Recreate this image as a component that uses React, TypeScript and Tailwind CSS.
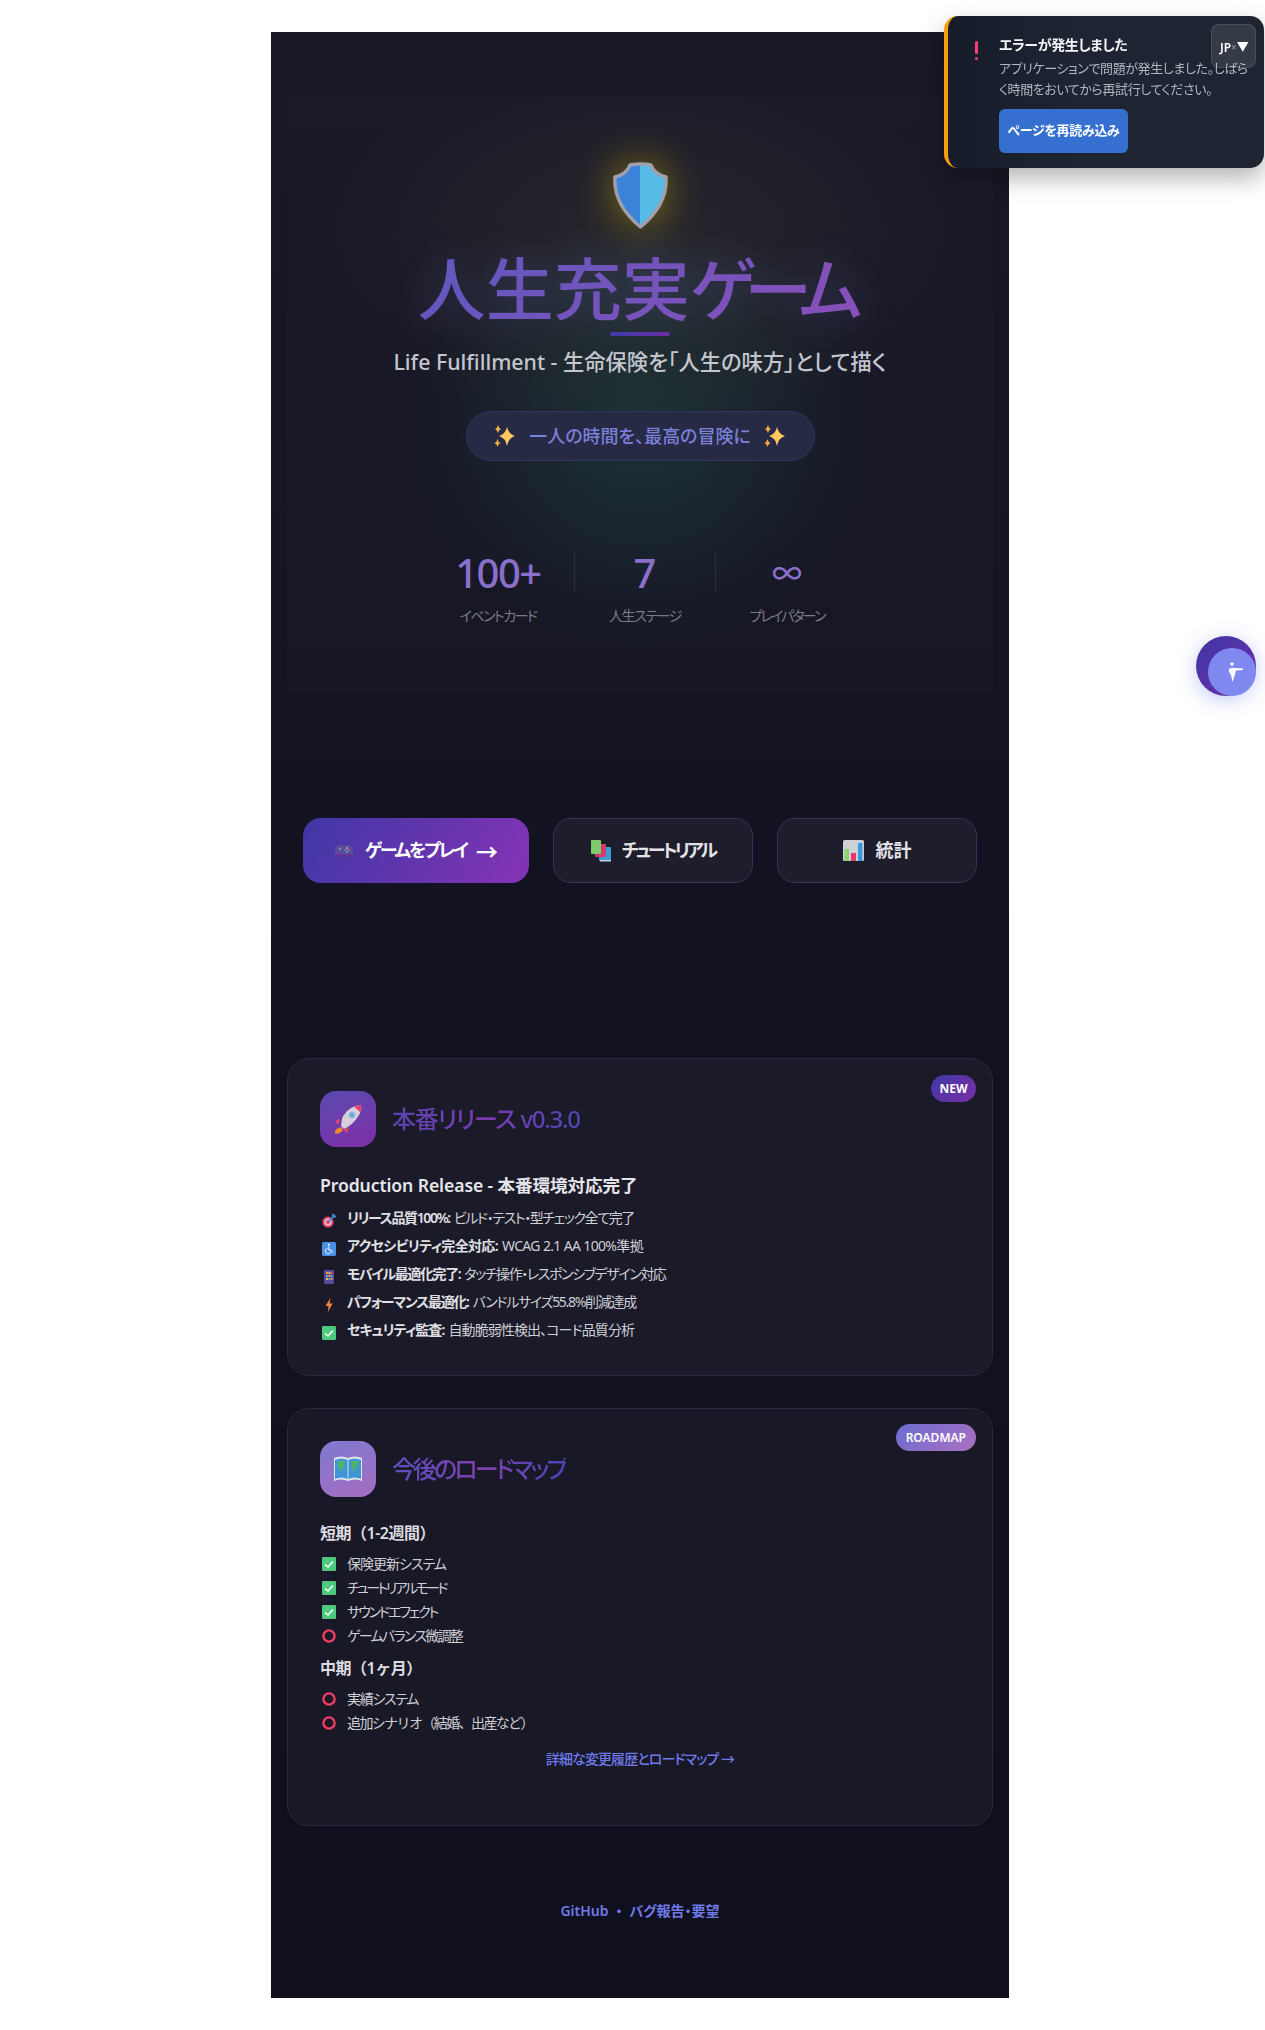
import React from "react"

function ShieldIcon() {
  return (
    <svg width="57" height="67" viewBox="0 0 57 67">
      <defs>
        <linearGradient id="shield-fill" x1="0" y1="0" x2="1" y2="0">
          <stop offset="50%" stopColor="#3b82d9" />
          <stop offset="50%" stopColor="#57bbe8" />
        </linearGradient>
      </defs>
      <path d="M18 3 Q28.5 1 39 3 Q42 12 54 15 Q56 42 28.5 65 Q1 42 3 15 Q15 12 18 3Z" fill="url(#shield-fill)" stroke="#a0a0aa" strokeWidth="3.4" strokeLinejoin="round" />
    </svg>
  )
}

function Sparkles() {
  return (
    <svg width="24" height="24" viewBox="0 0 24 24">
      <path d="M14 3 Q15.5 10 22 12 Q15.5 14 14 22 Q12.5 14 6 12 Q12.5 10 14 3Z" fill="#fdc95c" />
      <path d="M5 1 Q5.6 4 8 5 Q5.6 6 5 9 Q4.4 6 2 5 Q4.4 4 5 1Z" fill="#f9b24a" />
      <path d="M4.5 15 Q5.1 18 7.5 19 Q5.1 20 4.5 23 Q3.9 20 1.5 19 Q3.9 18 4.5 15Z" fill="#f9a83a" />
    </svg>
  )
}

function GamepadIcon() {
  return (
    <svg width="20" height="20" viewBox="0 0 20 20">
      <path d="M5 4 H15 Q18 4 19 11 Q20 17 17 17 Q15 17 13.5 14 H6.5 Q5 17 3 17 Q0 17 1 11 Q2 4 5 4Z" fill="#5b4aa0" />
      <path d="M3 17 Q5 17 6.5 14 H13.5 Q15 17 17 17 L18 13 H2Z" fill="#6d2f90" />
      <circle cx="6" cy="8" r="1.3" fill="#7f8a9e" />
      <circle cx="13" cy="7" r="0.9" fill="#e2c04e" />
      <circle cx="15" cy="9" r="0.9" fill="#e85a7a" />
      <circle cx="11.5" cy="9" r="0.9" fill="#4aa8e0" />
      <circle cx="13" cy="11" r="0.9" fill="#5cc77a" />
    </svg>
  )
}

function BooksIcon() {
  return (
    <svg width="21" height="22" viewBox="0 0 21 22">
      <rect x="8" y="7" width="12" height="14" rx="1" fill="#3f9ad6" />
      <rect x="4" y="4" width="11" height="13" rx="1" fill="#d63a6b" />
      <rect x="0" y="0" width="10" height="14" rx="1" fill="#7ccb6c" />
      <rect x="9" y="20" width="11" height="1.5" fill="#c7d2dd" />
    </svg>
  )
}

function ChartIcon() {
  return (
    <svg width="21" height="21" viewBox="0 0 21 21">
      <rect width="21" height="21" rx="1.5" fill="#cfd0d6" />
      <rect x="1.5" y="9" width="4.5" height="12" fill="#86d36f" />
      <rect x="8" y="13" width="5" height="8" fill="#e8376e" />
      <rect x="15" y="3" width="4.5" height="18" fill="#3a9ae0" />
    </svg>
  )
}

function RocketIcon() {
  return (
    <svg width="32" height="32" viewBox="0 0 32 32">
      <path d="M9 24 Q2 26 3 31 Q8 31 11 27Z" fill="#f08a2c" />
      <path d="M8 16 L3 18 L6 22Z M17 25 L15 30 L11 27Z" fill="#e8416a" />
      <path d="M9 23 Q9 11 19 5 Q24 2 29 2 Q30 7 27 12 Q21 22 12 26Z" fill="#d9cfdc" />
      <path d="M22 3.5 Q26 2 29 2 Q30 5 28.5 9.5Z" fill="#e8416a" />
      <circle cx="20" cy="12" r="3" fill="#5bb0e8" stroke="#a9b8cc" strokeWidth="1" />
    </svg>
  )
}

function MapIcon() {
  return (
    <svg width="30" height="28" viewBox="0 0 30 28">
      <path d="M1 3 Q8 0 15 3 Q22 0 29 3 V26 Q22 23 15 26 Q8 23 1 26Z" fill="#dfe5ea" />
      <path d="M2 5 Q8 2 15 5 Q22 2 28 5 V24 Q22 21 15 24 Q8 21 2 24Z" fill="#3f95d6" />
      <path d="M15 4 V26" stroke="#d0dbe6" strokeWidth="1" />
      <path d="M5 6 L12 6 L11 11 L8 17 L6 12 L4 10Z M18 6 L26 6 L25 11 L22 12 L23 17 L19 14Z" fill="#4fb36a" />
    </svg>
  )
}

function TargetIcon() {
  return (
    <svg width="14" height="14" viewBox="0 0 14 14" className="shrink-0">
      <circle cx="6" cy="8" r="5.6" fill="#e8416e" />
      <circle cx="6" cy="8" r="3.6" fill="#f3c3d0" />
      <circle cx="6" cy="8" r="2" fill="#e8416e" />
      <path d="M6 8 L12 2" stroke="#3a8fd8" strokeWidth="1.6" />
      <path d="M10 0 H12.5 V1.5 H14 V3.5 H11 L10 2Z" fill="#3a8fd8" />
    </svg>
  )
}

function WheelchairIcon() {
  return (
    <svg width="14" height="14" viewBox="0 0 14 14" className="shrink-0">
      <rect width="14" height="14" rx="1.5" fill="#4a8fe8" />
      <circle cx="6.8" cy="2.8" r="1" fill="#fff" />
      <path d="M6.8 4.5 V8 H9.3 L10.5 11" stroke="#fff" strokeWidth="0.9" fill="none" />
      <path d="M5.5 6.3 A2.8 2.8 0 1 0 8.8 10" stroke="#fff" strokeWidth="0.9" fill="none" />
    </svg>
  )
}

function PhoneIcon() {
  return (
    <svg width="14" height="14" viewBox="0 0 14 14" className="shrink-0">
      <rect x="2" y="0" width="10" height="14" rx="1" fill="#5a4a98" />
      <rect x="4" y="2" width="2" height="2" fill="#e8944a" />
      <rect x="6.5" y="2" width="2" height="2" fill="#e8c04a" />
      <rect x="9" y="2" width="1.5" height="2" fill="#e8416e" />
      <rect x="4" y="5" width="2" height="2" fill="#4ab0e0" />
      <rect x="6.5" y="5" width="2" height="2" fill="#e8944a" />
      <rect x="9" y="5" width="1.5" height="2" fill="#5cc77a" />
      <rect x="4" y="8" width="2" height="2" fill="#e8c04a" />
      <rect x="6.5" y="8" width="2" height="2" fill="#4ab0e0" />
      <rect x="9" y="8" width="1.5" height="2" fill="#e8944a" />
    </svg>
  )
}

function BoltIcon() {
  return (
    <svg width="14" height="14" viewBox="0 0 14 14" className="shrink-0">
      <path d="M8.5 0 L3.5 8 H6.5 L6 14 L10.5 5.5 H7.5Z" fill="#f5873c" />
    </svg>
  )
}

function CheckIcon() {
  return (
    <svg width="14" height="14" viewBox="0 0 14 14" className="shrink-0">
      <rect width="14" height="14" rx="1.2" fill="#4ac97f" />
      <path d="M3 7.5 L6 10 L11 4.5" stroke="#fff" strokeWidth="1.6" fill="none" />
    </svg>
  )
}

function RingIcon() {
  return (
    <svg width="14" height="14" viewBox="0 0 14 14" className="shrink-0">
      <circle cx="7" cy="7" r="5.6" fill="none" stroke="#f03d64" strokeWidth="2.4" />
    </svg>
  )
}

const releaseItems = [
  { icon: <TargetIcon />, label: "リリース品質100%:", text: "ビルド・テスト・型チェック全て完了", spacing: "tracking-[-1.4px]" },
  { icon: <WheelchairIcon />, label: "アクセシビリティ完全対応:", text: "WCAG 2.1 AA 100%準拠", spacing: "tracking-[-0.65px]" },
  { icon: <PhoneIcon />, label: "モバイル最適化完了:", text: "タッチ操作・レスポンシブデザイン対応", spacing: "tracking-[-1.4px]" },
  { icon: <BoltIcon />, label: "パフォーマンス最適化:", text: "バンドルサイズ55.8%削減達成", spacing: "tracking-[-1.3px]" },
  { icon: <CheckIcon />, label: "セキュリティ監査:", text: "自動脆弱性検出、コード品質分析", spacing: "tracking-[-0.9px]" },
]

const shortTerm = [
  { icon: <CheckIcon />, text: "保険更新システム", spacing: "tracking-[-1px]" },
  { icon: <CheckIcon />, text: "チュートリアルモード", spacing: "tracking-[-2.6px]" },
  { icon: <CheckIcon />, text: "サウンドエフェクト", spacing: "tracking-[-2.1px]" },
  { icon: <RingIcon />, text: "ゲームバランス微調整", spacing: "tracking-[-1.7px]" },
]

const midTerm = [
  { icon: <RingIcon />, text: "実績システム", spacing: "tracking-[-1.3px]" },
  { icon: <RingIcon />, text: "追加シナリオ（結婚、出産など）", spacing: "tracking-[-1.6px] [font-feature-settings:normal]" },
]

type RoadmapItem = { icon: React.ReactNode; text: string; spacing: string }

function RoadmapList({ items }: { items: RoadmapItem[] }) {
  return (
    <ul className="flex flex-col">
      {items.map((item) => (
        <li key={item.text} className="flex items-center h-[24px] text-[14px] text-[#cfcfd6]">
          <span className="w-[27px] pl-[2px] pt-[1px]">{item.icon}</span>
          <span className={item.spacing}>{item.text}</span>
        </li>
      ))}
    </ul>
  )
}

function Stat({ value, label, width, valueClass, labelClass }: { value: string; label: string; width: string; valueClass: string; labelClass: string }) {
  return (
    <div className={"flex flex-col items-center " + width}>
      <div className={"h-[54px] leading-[54px] font-medium text-[#8a6fcb] " + valueClass}>{value}</div>
      <div className={"mt-[6px] text-[14px] leading-[20px] text-[#7b7b85] whitespace-nowrap " + labelClass}>{label}</div>
    </div>
  )
}

export default function App() {
  return (
    <div className="min-h-[2030px] bg-white pt-[32px] [font-family:'Noto_Sans','Noto_Sans_CJK_JP',sans-serif] [font-feature-settings:'palt']">
      {/* Main column */}
      <main className="ml-[271px] w-[738px] h-[1966px] px-[16px] pt-[64px] bg-[linear-gradient(180deg,#181826_0%,#11111f_50%,#0f0f1d_100%)]">
        {/* Hero */}
        <section className="h-[596px] flex flex-col items-center pt-[66px] bg-[radial-gradient(ellipse_230px_220px_at_50%_56%,rgba(40,120,90,0.26),transparent),radial-gradient(ellipse_320px_190px_at_50%_25%,rgba(130,115,60,0.14),transparent),linear-gradient(180deg,#1a1a29,#161625)]">
          <div className="h-[67px] drop-shadow-[0_0_20px_rgba(255,215,0,0.45)]">
            <ShieldIcon />
          </div>
          <h1 className="mt-[18px] h-[84px] text-[68px] leading-[84px] font-medium whitespace-nowrap text-transparent bg-clip-text bg-[linear-gradient(135deg,#5f58bf,#8a4fb8)] drop-shadow-[0_0_18px_rgba(102,126,234,0.3)]">
            人生充実<span className="tracking-[-11px] mr-[11px]">ゲーム</span>
          </h1>
          <div className="mt-[1px] w-[60px] h-[4px] rounded-full bg-[linear-gradient(90deg,#3f3aa8,#6c2ea4)]" />
          <p className="mt-[10px] text-[21.3px] leading-[32px] font-medium text-[#c4c6ce]">
            Life Fulfillment - 生命保険を「人生の味方」として描く
          </p>
          <div className="mt-[33px] w-[349px] h-[50px] flex items-center justify-center gap-[12px] rounded-full border border-[#2f3560] bg-[#262a45] text-[18px] font-medium text-[#7b80d8]">
            <Sparkles />
            <span>一人の時間を、最高の冒険に</span>
            <Sparkles />
          </div>
          {/* Stats */}
          <div className="mt-[85px] flex items-start gap-[32px]">
            <Stat value="100+" label="イベントカード" width="w-[88px]" valueClass="text-[40px] tracking-[-1.5px]" labelClass="tracking-[-1.5px]" />
            <div className="mt-[6px] w-px h-[39px] bg-[#2c2c44]" />
            <Stat value="7" label="人生ステージ" width="w-[76px]" valueClass="text-[40px]" labelClass="tracking-[-1.4px]" />
            <div className="mt-[6px] w-px h-[39px] bg-[#2c2c44]" />
            <Stat value="∞" label="プレイパターン" width="w-[78px]" valueClass="text-[30px]" labelClass="tracking-[-1.9px]" />
          </div>
        </section>

        {/* Actions */}
        <div className="mt-[126px] mx-[16px] grid grid-cols-[226px_1fr_1fr] gap-[24px]">
          <button className="h-[65px] flex items-center justify-center rounded-[18px] bg-[linear-gradient(120deg,#3f37a5,#8533b5)] text-[18px] font-semibold text-white">
            <GamepadIcon />
            <span className="ml-[11px] tracking-[-2.2px]">ゲームをプレイ</span>
            <span className="ml-[9px] text-[22px] leading-none">→</span>
          </button>
          <button className="h-[65px] flex items-center justify-center gap-[10px] rounded-[18px] border border-[#34345c] bg-[#1d1d2c] text-[18px] font-semibold text-[#e4e4e8]">
            <BooksIcon />
            <span className="tracking-[-3px]">チュートリアル</span>
          </button>
          <button className="h-[65px] flex items-center justify-center gap-[12px] rounded-[18px] border border-[#34345c] bg-[#1d1d2c] text-[18px] font-semibold text-[#e4e4e8]">
            <ChartIcon />
            統計
          </button>
        </div>

        {/* Release card */}
        <section className="relative mt-[175px] h-[318px] rounded-[22px] border border-[#29293f] bg-[#1a1a29] px-[32px] pt-[32px]">
          <span className="absolute top-[16px] right-[16px] h-[27px] px-[8.5px] flex items-center rounded-full bg-[linear-gradient(135deg,#3f37a5,#7a2fa8)] text-[12px] font-bold text-white">
            NEW
          </span>
          <div className="flex items-center gap-[16px]">
            <div className="w-[56px] h-[56px] flex items-center justify-center rounded-[16px] bg-[linear-gradient(160deg,#5a4ab0,#7f2fa8)]"><RocketIcon /></div>
            <h2 className="text-[24px] font-medium tracking-[-1.3px] text-transparent bg-clip-text bg-[linear-gradient(90deg,#5a45b0,#7a3ab0_50%,#4f48b2)]">本番リリース v0.3.0</h2>
          </div>
          <h3 className="mt-[24px] text-[17.6px] leading-[28px] font-semibold tracking-[-0.1px] text-[#e6e6ea]">Production Release - 本番環境対応完了</h3>
          <ul className="mt-[4px] flex flex-col">
            {releaseItems.map((item) => (
              <li key={item.label} className={"flex h-[28px] items-center text-[14px] text-[#cfcfd6] whitespace-nowrap " + item.spacing}>
                <span className="w-[27px] pl-[2px] pt-[8px]">{item.icon}</span>
                <strong className="font-semibold text-[#e0e0e4]">{item.label}</strong>
                <span className="ml-[4px]">{item.text}</span>
              </li>
            ))}
          </ul>
        </section>

        {/* Roadmap card */}
        <section className="relative mt-[32px] h-[418px] rounded-[22px] border border-[#29293f] bg-[#181826] px-[32px] pt-[32px]">
          <span className="absolute top-[15px] right-[16px] h-[27px] px-[10px] flex items-center rounded-full bg-[linear-gradient(135deg,#6b6cd2,#ab70c0)] text-[12px] font-semibold text-white">
            ROADMAP
          </span>
          <div className="flex items-center gap-[16px]">
            <div className="w-[56px] h-[56px] flex items-center justify-center rounded-[16px] bg-[linear-gradient(160deg,#7f7ad0,#a56cc0)]"><MapIcon /></div>
            <h2 className="text-[24px] font-medium tracking-[-2.9px] text-transparent bg-clip-text bg-[linear-gradient(90deg,#5a50c0,#8040b0_50%,#4a45b5)]">今後のロードマップ</h2>
          </div>
          <h4 className="mt-[24px] text-[16px] leading-[24px] font-semibold tracking-[-0.5px] text-[#dcdce0] [font-feature-settings:normal]">短期（1-2週間）</h4>
          <div className="mt-[6px]"><RoadmapList items={shortTerm} /></div>
          <h4 className="mt-[9px] text-[16px] leading-[24px] font-semibold tracking-[-0.5px] text-[#dcdce0] [font-feature-settings:normal]">中期（1ヶ月）</h4>
          <div className="mt-[6px]"><RoadmapList items={midTerm} /></div>
          <div className="mt-[15px] text-center text-[14px] font-medium leading-[20px] tracking-[-0.9px] text-[#6f7ae8]">詳細な変更履歴とロードマップ →</div>
        </section>

        {/* Footer */}
        <footer className="mt-[75px] flex justify-center gap-[7px] text-[14px] leading-[20px] font-semibold text-[#6f7ae8]">
          <span>GitHub</span>
          <span>・</span>
          <span>バグ報告・要望</span>
        </footer>
      </main>

      {/* Error toast */}
      <div className="fixed top-[16px] left-[944px] w-[320px] h-[152px] flex rounded-[14px] border-l-[4px] border-[#f59e0b] bg-[linear-gradient(90deg,#171c2b,#1f2433_40%)] shadow-[0_10px_25px_rgba(0,0,0,0.3)]">
        <div className="w-[51px] pt-[25px] pl-[27px]">
          <div className="w-[3px] h-[13px] rounded-full bg-[#f43f7b]" />
          <div className="mt-[3px] w-[3px] h-[3px] rounded-full bg-[#f43f7b]" />
        </div>
        <div className="flex-1 pt-[19px] pr-[12px]">
          <div className="text-[14px] leading-[20px] font-semibold tracking-[-0.4px] text-[#f3f4f6]">エラーが発生しました</div>
          <p className="mt-[3px] text-[13px] leading-[21px] tracking-[-0.4px] text-[#b0b5c0]">アプリケーションで問題が発生しました。しばらく時間をおいてから再試行してください。</p>
          <button className="mt-[9px] w-[129px] h-[44px] rounded-[6px] bg-[#3570d0] text-[13px] font-semibold tracking-[-0.3px] text-white">ページを再読み込み</button>
        </div>
      </div>

      {/* Language selector */}
      <div className="fixed top-[24px] left-[1211px] w-[45px] h-[44px] flex items-center pl-[8px] pt-[3px] rounded-[8px] border border-white/10 bg-white/10 text-[12px] font-semibold text-white">
        <span>JP</span>
        <span className="text-[10px] text-white/40">×</span>
        <span className="text-[12px] -translate-y-[1px]">▼</span>
      </div>

      {/* Accessibility button */}
      <div className="fixed top-[636px] left-[1196px] w-[60px] h-[60px] rounded-full bg-[linear-gradient(135deg,#3f37a5,#6f2da8)] shadow-[0_4px_20px_rgba(102,126,234,0.4)]">
        <div className="absolute right-0 bottom-0 w-[48px] h-[48px] flex items-center justify-center pl-[6px] pb-[1px] rounded-full bg-[#7f88ee]">
          <svg width="15" height="20" viewBox="0 0 15 20" fill="white">
            <circle cx="4" cy="2" r="1.7" />
            <path d="M1 7 Q4 5 7 6 L15 6.5 L15 8 L8 8.5 L6.5 14 L4.5 20 L3 13 Q0 9.5 1 7Z" />
          </svg>
        </div>
      </div>
    </div>
  )
}
